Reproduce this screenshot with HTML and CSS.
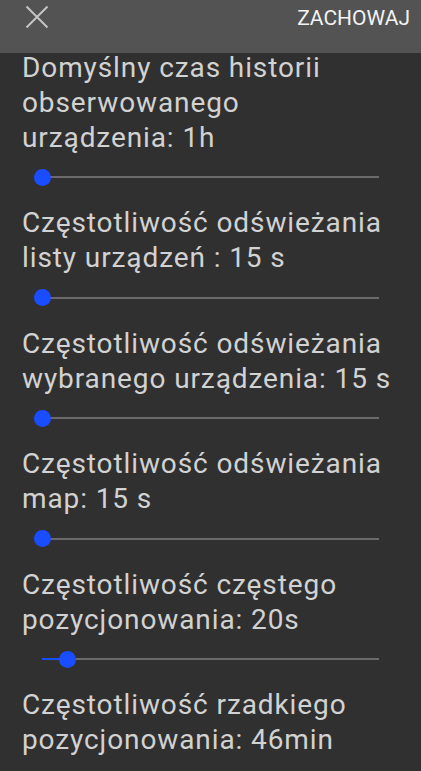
FILE: index.html
```html
<!DOCTYPE html>
<html lang="pl">
<head>
<meta charset="utf-8">
<link rel="stylesheet" href="styles.css">
</head>
<body>
<header class="toolbar">
  <svg class="close" width="24" height="24" viewBox="0 0 24 24"><path d="M1.5 1.5 L22.5 22.5 M22.5 1.5 L1.5 22.5" stroke="#c4c4c4" stroke-width="2" fill="none"/></svg>
  <span class="save">ZACHOWAJ</span>
</header>
<main class="content">
  <section class="setting">
    <p class="label">Domyślny czas historii obserwowanego urządzenia: 1h</p>
    <div class="slider"><div class="track"><div class="fill" style="width:0px"></div><div class="thumb" style="left:0px"></div></div></div>
  </section>
  <section class="setting">
    <p class="label">Częstotliwość odświeżania listy urządzeń : 15 s</p>
    <div class="slider"><div class="track"><div class="fill" style="width:0px"></div><div class="thumb" style="left:0px"></div></div></div>
  </section>
  <section class="setting">
    <p class="label">Częstotliwość odświeżania wybranego urządzenia: 15 s</p>
    <div class="slider"><div class="track"><div class="fill" style="width:0px"></div><div class="thumb" style="left:0px"></div></div></div>
  </section>
  <section class="setting">
    <p class="label">Częstotliwość odświeżania map: 15 s</p>
    <div class="slider"><div class="track"><div class="fill" style="width:0px"></div><div class="thumb" style="left:0px"></div></div></div>
  </section>
  <section class="setting">
    <p class="label">Częstotliwość częstego pozycjonowania: 20s</p>
    <div class="slider"><div class="track"><div class="fill" style="width:25px"></div><div class="thumb" style="left:25px"></div></div></div>
  </section>
  <section class="setting">
    <p class="label">Częstotliwość rzadkiego pozycjonowania: 46min</p>
    <div class="slider"><div class="track"><div class="fill" style="width:0px"></div><div class="thumb" style="left:0px"></div></div></div>
  </section>
</main>
</body>
</html>
```
FILE: styles.css
```css
html, body {
  margin: 0;
  padding: 0;
  background: #303030;
  height: 771px;
  overflow: hidden;
}
body {
  font-family: Roboto, "Noto Sans", sans-serif;
  color: #d2d2d2;
}
.toolbar {
  position: relative;
  z-index: 2;
  height: 53px;
  background: #535353;
  display: flex;
  align-items: flex-start;
  justify-content: space-between;
  padding: 5px 11px 0 25px;
  box-sizing: border-box;
}
.close {
  display: block;
}
.save {
  color: #f2f2f2;
  font-size: 21px;
  line-height: 24px;
  margin-top: 1px;
}
.content {
  margin-top: -3.5px;
  padding-left: 22px;
  padding-right: 24px;
}
.setting {
  margin: 0;
}
.label {
  margin: 0;
  font-size: 28px;
  line-height: 35px;
  letter-spacing: 0.9px;
}
.slider {
  height: 50.5px;
  padding-left: 20px;
  position: relative;
}
.track {
  position: relative;
  top: 21.5px;
  width: 337px;
  height: 2px;
  background: #6a6a6a;
}
.fill {
  position: absolute;
  left: 0;
  top: 0;
  height: 2px;
  background: #1a4dff;
}
.thumb {
  position: absolute;
  top: -7.5px;
  width: 17px;
  height: 17px;
  margin-left: -8.5px;
  border-radius: 50%;
  background: #1a4dff;
}
```
